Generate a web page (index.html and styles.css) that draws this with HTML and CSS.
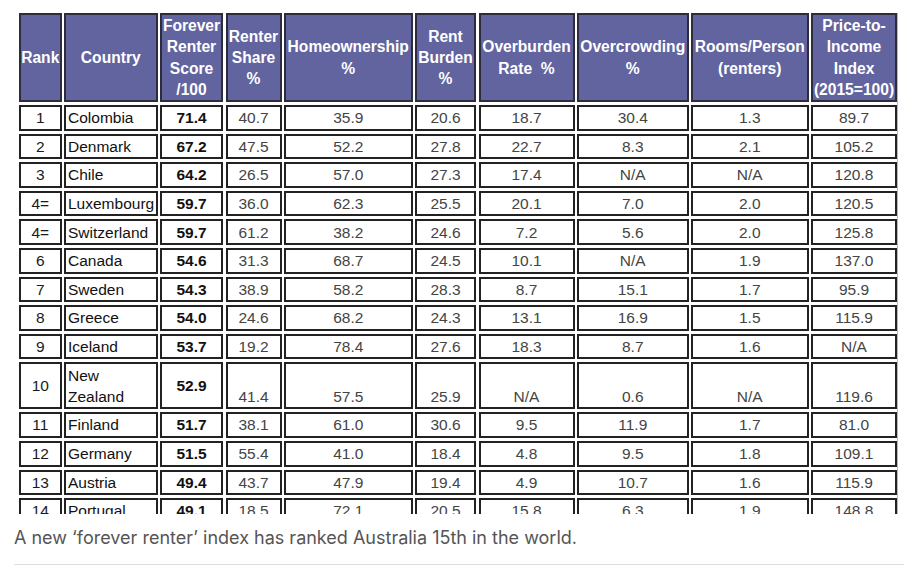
FILE: index.html
```html
<!DOCTYPE html>
<html lang="en">
<head>
<meta charset="utf-8">
<title>Forever renter index</title>
<link rel="stylesheet" href="styles.css">
</head>
<body>
<main class="article">
  <figure class="figure">
    <div class="shot">
      <div class="grid">
        <div class="c h">Rank</div>
        <div class="c h">Country</div>
        <div class="c h">Forever<br>Renter<br>Score<br>/100</div>
        <div class="c h">Renter<br>Share<br>%</div>
        <div class="c h">Homeownership<br>%</div>
        <div class="c h">Rent<br>Burden<br>%</div>
        <div class="c h">Overburden<br>Rate&nbsp; %</div>
        <div class="c h">Overcrowding<br>%</div>
        <div class="c h">Rooms/Person<br>(renters)</div>
        <div class="c h">Price-to-<br>Income<br>Index<br>(2015=100)</div>

        <div class="c r">1</div><div class="c l">Colombia</div><div class="c s">71.4</div><div class="c n">40.7</div><div class="c n">35.9</div><div class="c n">20.6</div><div class="c n">18.7</div><div class="c n">30.4</div><div class="c n">1.3</div><div class="c n">89.7</div>
        <div class="c r">2</div><div class="c l">Denmark</div><div class="c s">67.2</div><div class="c n">47.5</div><div class="c n">52.2</div><div class="c n">27.8</div><div class="c n">22.7</div><div class="c n">8.3</div><div class="c n">2.1</div><div class="c n">105.2</div>
        <div class="c r">3</div><div class="c l">Chile</div><div class="c s">64.2</div><div class="c n">26.5</div><div class="c n">57.0</div><div class="c n">27.3</div><div class="c n">17.4</div><div class="c n">N/A</div><div class="c n">N/A</div><div class="c n">120.8</div>
        <div class="c r">4=</div><div class="c l">Luxembourg</div><div class="c s">59.7</div><div class="c n">36.0</div><div class="c n">62.3</div><div class="c n">25.5</div><div class="c n">20.1</div><div class="c n">7.0</div><div class="c n">2.0</div><div class="c n">120.5</div>
        <div class="c r">4=</div><div class="c l">Switzerland</div><div class="c s">59.7</div><div class="c n">61.2</div><div class="c n">38.2</div><div class="c n">24.6</div><div class="c n">7.2</div><div class="c n">5.6</div><div class="c n">2.0</div><div class="c n">125.8</div>
        <div class="c r">6</div><div class="c l">Canada</div><div class="c s">54.6</div><div class="c n">31.3</div><div class="c n">68.7</div><div class="c n">24.5</div><div class="c n">10.1</div><div class="c n">N/A</div><div class="c n">1.9</div><div class="c n">137.0</div>
        <div class="c r">7</div><div class="c l">Sweden</div><div class="c s">54.3</div><div class="c n">38.9</div><div class="c n">58.2</div><div class="c n">28.3</div><div class="c n">8.7</div><div class="c n">15.1</div><div class="c n">1.7</div><div class="c n">95.9</div>
        <div class="c r">8</div><div class="c l">Greece</div><div class="c s">54.0</div><div class="c n">24.6</div><div class="c n">68.2</div><div class="c n">24.3</div><div class="c n">13.1</div><div class="c n">16.9</div><div class="c n">1.5</div><div class="c n">115.9</div>
        <div class="c r">9</div><div class="c l">Iceland</div><div class="c s">53.7</div><div class="c n">19.2</div><div class="c n">78.4</div><div class="c n">27.6</div><div class="c n">18.3</div><div class="c n">8.7</div><div class="c n">1.6</div><div class="c n">N/A</div>
        <div class="c r">10</div><div class="c l">New<br>Zealand</div><div class="c s">52.9</div><div class="c n low">41.4</div><div class="c n low">57.5</div><div class="c n low">25.9</div><div class="c n low">N/A</div><div class="c n low">0.6</div><div class="c n low">N/A</div><div class="c n low">119.6</div>
        <div class="c r">11</div><div class="c l">Finland</div><div class="c s">51.7</div><div class="c n">38.1</div><div class="c n">61.0</div><div class="c n">30.6</div><div class="c n">9.5</div><div class="c n">11.9</div><div class="c n">1.7</div><div class="c n">81.0</div>
        <div class="c r">12</div><div class="c l">Germany</div><div class="c s">51.5</div><div class="c n">55.4</div><div class="c n">41.0</div><div class="c n">18.4</div><div class="c n">4.8</div><div class="c n">9.5</div><div class="c n">1.8</div><div class="c n">109.1</div>
        <div class="c r">13</div><div class="c l">Austria</div><div class="c s">49.4</div><div class="c n">43.7</div><div class="c n">47.9</div><div class="c n">19.4</div><div class="c n">4.9</div><div class="c n">10.7</div><div class="c n">1.6</div><div class="c n">115.9</div>
        <div class="c r">14</div><div class="c l">Portugal</div><div class="c s">49.1</div><div class="c n">18.5</div><div class="c n">72.1</div><div class="c n">20.5</div><div class="c n">15.8</div><div class="c n">6.3</div><div class="c n">1.9</div><div class="c n">148.8</div>
      </div>
    </div>
    <figcaption class="caption">A new ‘forever renter’ index has ranked Australia 15th in the world.</figcaption>
  </figure>
</main>
</body>
</html>
```

FILE: styles.css
```css
html, body {
  margin: 0;
  padding: 0;
  background: #fff;
}

.article {
  padding: 0 8px 0 14px;
}

.figure {
  margin: 0;
  border-bottom: 1px solid #dedede;
  padding-bottom: 14px;
}

.shot {
  height: 514px;
  overflow: hidden;
  padding: 13px 0 0 5px;
  box-sizing: border-box;
}

.grid {
  display: grid;
  grid-template-columns: 42.5px 93.5px 63px 56px 128.5px 61px 96px 111.5px 117.5px 86px;
  grid-template-rows: 89px repeat(9, 25.6px) 47px repeat(4, 25.6px);
  column-gap: 2.5px;
  row-gap: 3px;
  font-family: "Liberation Sans", Arial, sans-serif;
  font-size: 15.5px;
  line-height: 21.3px;
  width: max-content;
  box-shadow: 1px 0 0 #b8b8b8;
}

.c {
  box-sizing: border-box;
  border: 2px solid #222;
  background: #fff;
  display: flex;
  align-items: center;
  justify-content: center;
  text-align: center;
  white-space: nowrap;
  overflow: hidden;
}

.h {
  background: #6264a0;
  color: #fff;
  font-weight: bold;
  font-size: 15.6px;
  border-color: #2c2c3c;
}

.r {
  color: #1a1a1a;
}

.l {
  justify-content: flex-start;
  text-align: left;
  padding-left: 2px;
  color: #111;
}

.s {
  font-weight: bold;
  color: #111;
}

.n {
  color: #444;
}

.low {
  align-items: flex-end;
}

.caption {
  margin: 0;
  padding-top: 12px;
  font-family: Inter, "Open Sans", sans-serif;
  font-size: 18px;
  line-height: 24px;
  color: #555;
}
```
